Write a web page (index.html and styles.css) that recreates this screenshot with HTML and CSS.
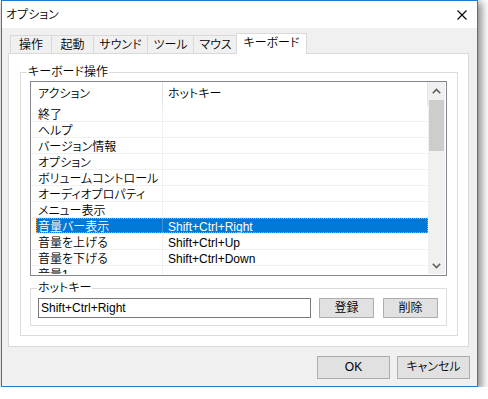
FILE: index.html
```html
<!DOCTYPE html>
<html lang="ja">
<head>
<meta charset="utf-8">
<title>オプション</title>
<link rel="stylesheet" href="styles.css">
</head>
<body>
<div class="window">
  <div class="titlebar">
    <span class="title">オプション</span>
    <svg class="close" width="10" height="10" viewBox="0 0 10 10"><path d="M0.5 0.5L9.5 9.5M9.5 0.5L0.5 9.5" stroke="#000" stroke-width="1.1" fill="none"/></svg>
  </div>
  <div class="client">
    <div class="tabs">
      <div class="tab t1">操作</div>
      <div class="tab t2">起動</div>
      <div class="tab t3">サウンド</div>
      <div class="tab t4">ツール</div>
      <div class="tab t5">マウス</div>
      <div class="tab active">キーボード</div>
    </div>
    <div class="panel">
      <div class="group g1">
        <span class="legend lg1">キーボード操作</span>
        <div class="listview">
          <div class="lv-body">
            <div class="lv-header"><div class="h1">アクション</div><div class="h2">ホットキー</div></div>
            <div class="row"><div class="cells"><div class="c1">終了</div><div class="c2"></div></div></div>
            <div class="row"><div class="cells"><div class="c1">ヘルプ</div><div class="c2"></div></div></div>
            <div class="row"><div class="cells"><div class="c1">バージョン情報</div><div class="c2"></div></div></div>
            <div class="row"><div class="cells"><div class="c1">オプション</div><div class="c2"></div></div></div>
            <div class="row"><div class="cells"><div class="c1">ボリュームコントロール</div><div class="c2"></div></div></div>
            <div class="row"><div class="cells"><div class="c1">オーディオプロパティ</div><div class="c2"></div></div></div>
            <div class="row"><div class="cells"><div class="c1">メニュー表示</div><div class="c2"></div></div></div>
            <div class="row sel"><div class="cells"><div class="c1">音量バー表示</div><div class="c2">Shift+Ctrl+Right</div></div></div>
            <div class="row"><div class="cells"><div class="c1">音量を上げる</div><div class="c2">Shift+Ctrl+Up</div></div></div>
            <div class="row"><div class="cells"><div class="c1">音量を下げる</div><div class="c2">Shift+Ctrl+Down</div></div></div>
            <div class="row"><div class="cells"><div class="c1">音量1</div><div class="c2"></div></div></div>
          </div>
          <div class="scrollbar">
            <div class="sb-btn"><svg width="9" height="6" viewBox="0 0 9 6"><path d="M0.8 5.2L4.5 1.5L8.2 5.2" stroke="#606060" stroke-width="1.6" fill="none"/></svg></div>
            <div class="sb-track"><div class="sb-thumb"></div></div>
            <div class="sb-btn"><svg width="9" height="6" viewBox="0 0 9 6"><path d="M0.8 0.8L4.5 4.5L8.2 0.8" stroke="#606060" stroke-width="1.6" fill="none"/></svg></div>
          </div>
        </div>
        <div class="group g2">
          <span class="legend lg2">ホットキー</span>
          <div class="hk-row">
            <div class="textbox">Shift+Ctrl+Right</div>
            <button class="btn">登録</button>
            <button class="btn">削除</button>
          </div>
        </div>
      </div>
    </div>
    <div class="footer">
      <button class="btn big">OK</button>
      <button class="btn big">キャンセル</button>
    </div>
  </div>
</div>
</body>
</html>
```
FILE: styles.css
```css
* { box-sizing: border-box; }
html, body { margin: 0; background: #fff; }
body {
  font-family: "Liberation Sans", "Noto Sans CJK JP", sans-serif;
  font-size: 12px;
  font-weight: 350;
  color: #000;
  font-feature-settings: "palt";
}
.window {
  margin-left: 1px;
  width: 477px;
  height: 387px;
  border: 1px solid #1b7ed3;
  background: #f0f0f0;
  box-shadow: 3px 3px 8px 1px rgba(0,0,0,0.45);
  display: flex;
  flex-direction: column;
}
.titlebar {
  height: 27px;
  background: #fff;
  display: flex;
  align-items: center;
  justify-content: space-between;
  padding: 0 10px 0 4px;
  line-height: 16px;
}
.close { display: block; }
.client {
  flex: 1;
  padding: 5px 0 0 6px;
  display: flex;
  flex-direction: column;
}
.tabs {
  display: flex;
  align-items: flex-end;
  height: 20px;
  margin-left: 2px;
}
.tab {
  height: 18px;
  border: 1px solid #d9d9d9;
  border-bottom: none;
  margin-right: -1px;
  display: flex;
  align-items: center;
  justify-content: center;
  line-height: 16px;
  background: #f0f0f0;
}
.t1 { width: 42px; }
.t2 { width: 43px; }
.t3 { width: 55px; }
.t4 { width: 47px; }
.t5 { width: 45px; }
.tab.active {
  width: 71px;
  height: 21px;
  margin-bottom: -1px;
  margin-left: -1px;
  background: #fff;
  position: relative;
  z-index: 1;
  padding-bottom: 2px;
}
.panel {
  width: 461px;
  height: 294px;
  background: #fff;
  border: 1px solid #d9d9d9;
  padding: 18px 10px 10px 11px;
}
.group { border: 1px solid #dcdcdc; }
.g1 { padding: 0 10px 9px 9px; }
.legend {
  display: block;
  width: fit-content;
  height: 14px;
  line-height: 14px;
  margin-top: -8px;
  padding: 0 1px;
  background: #fff;
}
.lg1 { margin-left: -3px; }
.lg2 { margin-left: -1px; }
.listview {
  margin-top: 2px;
  height: 195px;
  border: 1px solid #828790;
  padding: 0 1px 1px 0;
  display: flex;
  background: #fff;
}
.lv-body { flex: 1; overflow: hidden; }
.lv-header { display: flex; height: 24px; }
.h1 {
  width: 132px;
  padding-left: 7px;
  border-right: 1px solid #e5e5e5;
  line-height: 25px;
}
.h2 {
  flex: 1;
  padding-left: 5px;
  border-right: 1px solid #e5e5e5;
  line-height: 25px;
}
.row {
  height: 16px;
  border-bottom: 1px solid #f0f0f0;
  display: flex;
}
.cells {
  margin-left: 5px;
  flex: 1;
  display: flex;
  line-height: 15px;
  white-space: nowrap;
}
.c1 {
  width: 127px;
  padding: 2px 0 0 2px;
  border-right: 1px solid #f0f0f0;
}
.c2 { flex: 1; padding: 2px 0 0 5px; }
.row.sel .cells {
  background: #0078d7;
  color: #fff;
  outline: 1px dotted #f0a040;
  outline-offset: -1px;
}
.row.sel .c1 { border-right-color: #3d94dd; }
.scrollbar {
  width: 17px;
  background: #f0f0f0;
  display: flex;
  flex-direction: column;
}
.sb-btn {
  height: 17px;
  display: flex;
  align-items: center;
  justify-content: center;
}
.sb-btn svg { display: block; }
.sb-track { flex: 1; }
.sb-thumb {
  margin: 1px 1px 0;
  height: 51px;
  background: #cdcdcd;
}
.g2 {
  margin-top: 12px;
  padding: 0 8px 7px 7px;
}
.hk-row { display: flex; margin-top: 3px; }
.textbox {
  width: 273px;
  height: 20px;
  border: 1px solid #7a7a7a;
  padding-left: 2px;
  line-height: 18px;
  margin-right: 8px;
  background: #fff;
}
.btn {
  width: 55px;
  height: 20px;
  background: #e1e1e1;
  border: 1px solid #adadad;
  font: inherit;
  line-height: 18px;
  padding: 0;
  text-align: center;
  color: #000;
}
.hk-row .btn + .btn { margin-left: 9px; }
.footer {
  display: flex;
  justify-content: flex-end;
  gap: 7px;
  margin-top: 9px;
  padding-right: 7px;
}
.btn.big {
  width: 73px;
  height: 23px;
  line-height: 21px;
}
```
